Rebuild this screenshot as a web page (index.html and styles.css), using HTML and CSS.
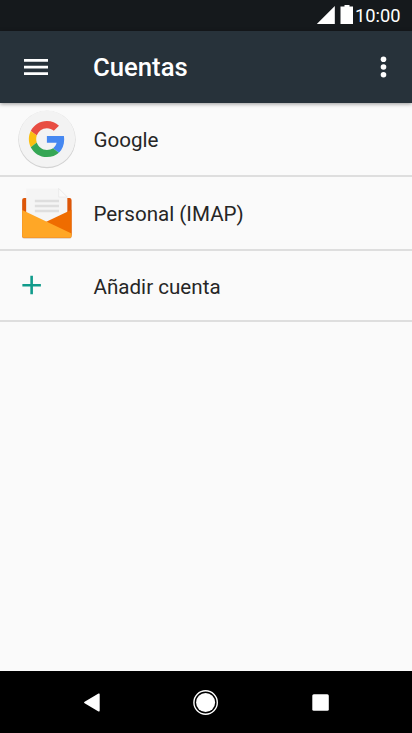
FILE: index.html
```html
<!DOCTYPE html>
<html lang="es">
<head>
<meta charset="utf-8">
<title>Cuentas</title>
<link rel="stylesheet" href="styles.css">
</head>
<body>
<div class="screen">
  <div class="status">
    <svg class="status-icons" viewBox="314 0 41 31"><path d="M316.800 24 334.800 6V24z"/><path d="M344.500 5h5v1.500h3.500V24h-12.500V6.500h4z"/></svg>
    <span class="time">10:00</span>
  </div>
  <header class="bar">
    <svg class="menu" viewBox="0 31 93 72"><path d="M24 59h24v2.700H24zM24 65.700h24v2.700H24zM24 72.300h24V75H24z"/></svg>
    <h1 class="title">Cuentas</h1>
    <svg class="more" viewBox="364 31 48 72"><circle cx="383.500" cy="59.300" r="2.800"/><circle cx="383.500" cy="67" r="2.800"/><circle cx="383.500" cy="74.700" r="2.800"/></svg>
  </header>
  <main class="list">
    <div class="row">
      <svg class="icon" viewBox="0 103 94 72">
        <circle cx="47.200" cy="139.500" r="28.800" fill="#d2d2d2"/>
        <circle cx="47.200" cy="138.800" r="28.400" fill="#f3f3f3"/>
        <g transform="translate(29 120.900) scale(.756)">
          <path fill="#e84d42" d="M24 9.500c3.540 0 6.710 1.220 9.210 3.600l6.850-6.850C35.900 2.380 30.470 0 24 0 14.620 0 6.510 5.380 2.560 13.220l7.980 6.190C12.430 13.720 17.740 9.500 24 9.500z"/>
          <path fill="#4688f1" d="M46.980 24.550c0-1.570-.15-3.090-.38-4.550H24v9.020h12.940c-.58 2.960-2.260 5.480-4.780 7.180l7.730 6c4.510-4.180 7.090-10.360 7.090-17.650z"/>
          <path fill="#fbbf12" d="M10.530 28.590c-.48-1.450-.76-2.990-.76-4.590s.27-3.140.76-4.590l-7.980-6.190C.92 16.460 0 20.120 0 24c0 3.880.92 7.540 2.560 10.780l7.970-6.190z"/>
          <path fill="#35a654" d="M24 48c6.480 0 11.930-2.130 15.890-5.810l-7.730-6c-2.150 1.450-4.920 2.300-8.160 2.300-6.260 0-11.570-4.220-13.470-9.910l-7.980 6.190C6.510 42.620 14.620 48 24 48z"/>
        </g>
      </svg>
      <span class="label">Google</span>
    </div>
    <div class="row">
      <svg class="icon" viewBox="0 177 94 72">
        <rect x="22.300" y="198.800" width="49.600" height="40.200" rx="2" fill="#dccfc2"/>
        <rect x="22.300" y="198" width="49.600" height="40" rx="2" fill="#dd5608"/>
        <path fill="#f5f5f5" d="M26.300 188.300h32.700l8.700 8.700v26H26.300z"/>
        <path fill="#fafafa" stroke="#dedede" stroke-width=".5" d="M59 188.300v8.700h8.700z"/>
        <path fill="#dedede" d="M35 199.800h24.300v2.500H35zM35 204.800h24.300v2.500H35zM35 209.800h24.300v2.500H35z"/>
        <path fill="#ef6c00" d="M71.900 209.800V235L46 222z"/>
        <path fill="#ffa726" d="M22.300 210 71.900 233.500V236a2 2 0 0 1-2 2h-45.600a2 2 0 0 1-2-2z"/>
      </svg>
      <span class="label">Personal (IMAP)</span>
    </div>
    <div class="row add">
      <svg class="icon" viewBox="0 251 94 69"><path fill="#109b8b" d="M30.500 275.800h2.600v8.100h8v2.500h-8v7.900h-2.600v-7.900h-8v-2.500h8z"/></svg>
      <span class="label">Añadir cuenta</span>
    </div>
  </main>
  <nav class="nav">
    <svg viewBox="0 671 412 62"><path d="M84.600 701.800 98.500 693.600Q99.700 693 99.700 694.400V710.600Q99.700 712 98.500 711.400L84.600 703.200Q83.400 702.500 84.600 701.800z"/><circle cx="205.600" cy="702.500" r="9.500"/><circle class="ring" cx="205.600" cy="702.500" r="11.700"/><rect x="312.300" y="694.200" width="16.500" height="16.600" rx="1.500"/></svg>
  </nav>
</div>
</body>
</html>
```
FILE: styles.css
```css
body {
  margin: 0;
  font-family: Roboto, sans-serif;
  background: #fafafa;
}
svg {
  display: block;
  flex: none;
}
.screen {
  width: 412px;
  height: 733px;
  display: flex;
  flex-direction: column;
  overflow: hidden;
}
.status {
  height: 31px;
  flex: none;
  display: flex;
  background: #15191c;
  color: #fff;
  padding-left: 314px;
}
.status-icons {
  width: 41px;
  height: 31px;
  fill: #fff;
}
.time {
  font-size: 18.300px;
  font-weight: 400;
  line-height: 32px;
}
.bar {
  height: 72px;
  flex: none;
  display: flex;
  background: #27323a;
  color: #fff;
  fill: #fff;
  box-shadow: 0 1px 4px rgba(0, 0, 0, .4);
  z-index: 1;
}
.menu {
  width: 93px;
  height: 72px;
}
.title {
  margin: 0;
  flex: 1;
  font-size: 25.700px;
  font-weight: 500;
  line-height: 73px;
}
.more {
  width: 48px;
  height: 72px;
}
.list {
  flex: 1;
}
.row {
  height: 72px;
  display: flex;
  border-bottom: 2px solid #dedede;
}
.icon {
  width: 93.500px;
  height: 72px;
}
.label {
  font-size: 20.600px;
  line-height: 75px;
  color: #262626;
}
.add {
  height: 69px;
}
.add .icon {
  height: 69px;
}
.add .label {
  line-height: 72px;
}
.nav {
  height: 62px;
  flex: none;
  background: #000;
}
.nav svg {
  width: 412px;
  height: 62px;
  fill: #fff;
}
.nav .ring {
  fill: none;
  stroke: #fff;
  stroke-width: 1.400;
}
```
